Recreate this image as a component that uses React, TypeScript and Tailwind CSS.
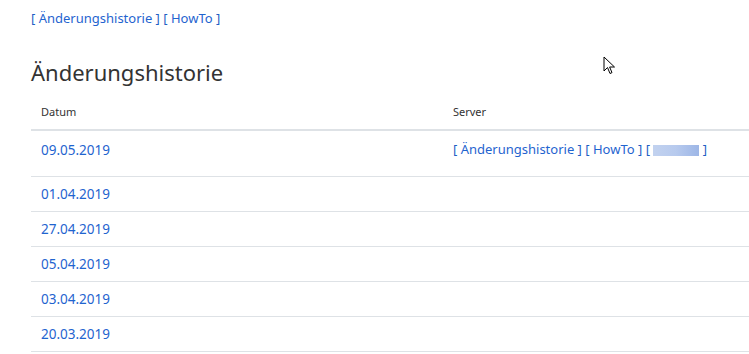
import React from 'react'

const dates = ['01.04.2019', '27.04.2019', '05.04.2019', '03.04.2019', '20.03.2019']

function Links({ redacted }: { redacted?: boolean }) {
  return (
    <span className="text-[#1f5fc4]">
      [ <a href="#" className="text-[#1f64cf]">Änderungshistorie</a> ] [ <a href="#" className="text-[#1f64cf]">HowTo</a> ]
      {redacted && (
        <>
          {' '}[ <span className="inline-block w-[46px] h-[11px] align-middle bg-gradient-to-r from-[#c2d2ef] via-[#b7caee] to-[#9db6e6]" /> ]
        </>
      )}
    </span>
  )
}

export default function App() {
  return (
    <div
      className="relative h-[354px] w-[749px] overflow-hidden bg-white text-[#333] text-[13px]"
      style={{ fontFamily: '"Segoe UI", "Noto Sans", sans-serif' }}
    >
      <div className="pl-[31px] pt-[9px]">
        <div className="leading-[18px]">
          <Links />
        </div>
        <h2 className="mt-[30px] text-[22px] font-normal leading-[30px] text-[#333]">Änderungshistorie</h2>

        <table className="mt-[14px] w-[760px] border-collapse text-left">
          <thead>
            <tr className="border-b-2 border-[#dee2e6]">
              <th className="w-[412px] pl-[10px] pt-[3px] pb-[8px] text-[11px] font-normal">Datum</th>
              <th className="pl-[10px] pt-[3px] pb-[8px] text-[11px] font-normal">Server</th>
            </tr>
          </thead>
          <tbody>
            <tr className="border-b border-[#dee2e6]">
              <td className="pl-[10px] pt-[9px] pb-[16px] align-top">
                <a href="#" className="text-[13.5px] text-[#1f64cf]">09.05.2019</a>
              </td>
              <td className="pl-[10px] pt-[9px] pb-[16px] align-top">
                <Links redacted />
              </td>
            </tr>
            {dates.map((d) => (
              <tr key={d} className="border-b border-[#dee2e6]">
                <td className="h-[35px] pl-[10px] align-middle">
                  <a href="#" className="text-[13.5px] text-[#1f64cf]">{d}</a>
                </td>
                <td />
              </tr>
            ))}
          </tbody>
        </table>
      </div>

      {/* mouse cursor */}
      <svg className="absolute left-[603px] top-[56px]" width="13" height="20" viewBox="0 0 13 20">
        <path d="M1 1 L1 15 L4.5 11.5 L7 17.5 L9 16.6 L6.6 11 L11.5 11 Z" fill="white" stroke="black" strokeWidth="1" strokeLinejoin="miter" />
      </svg>
    </div>
  )
}
